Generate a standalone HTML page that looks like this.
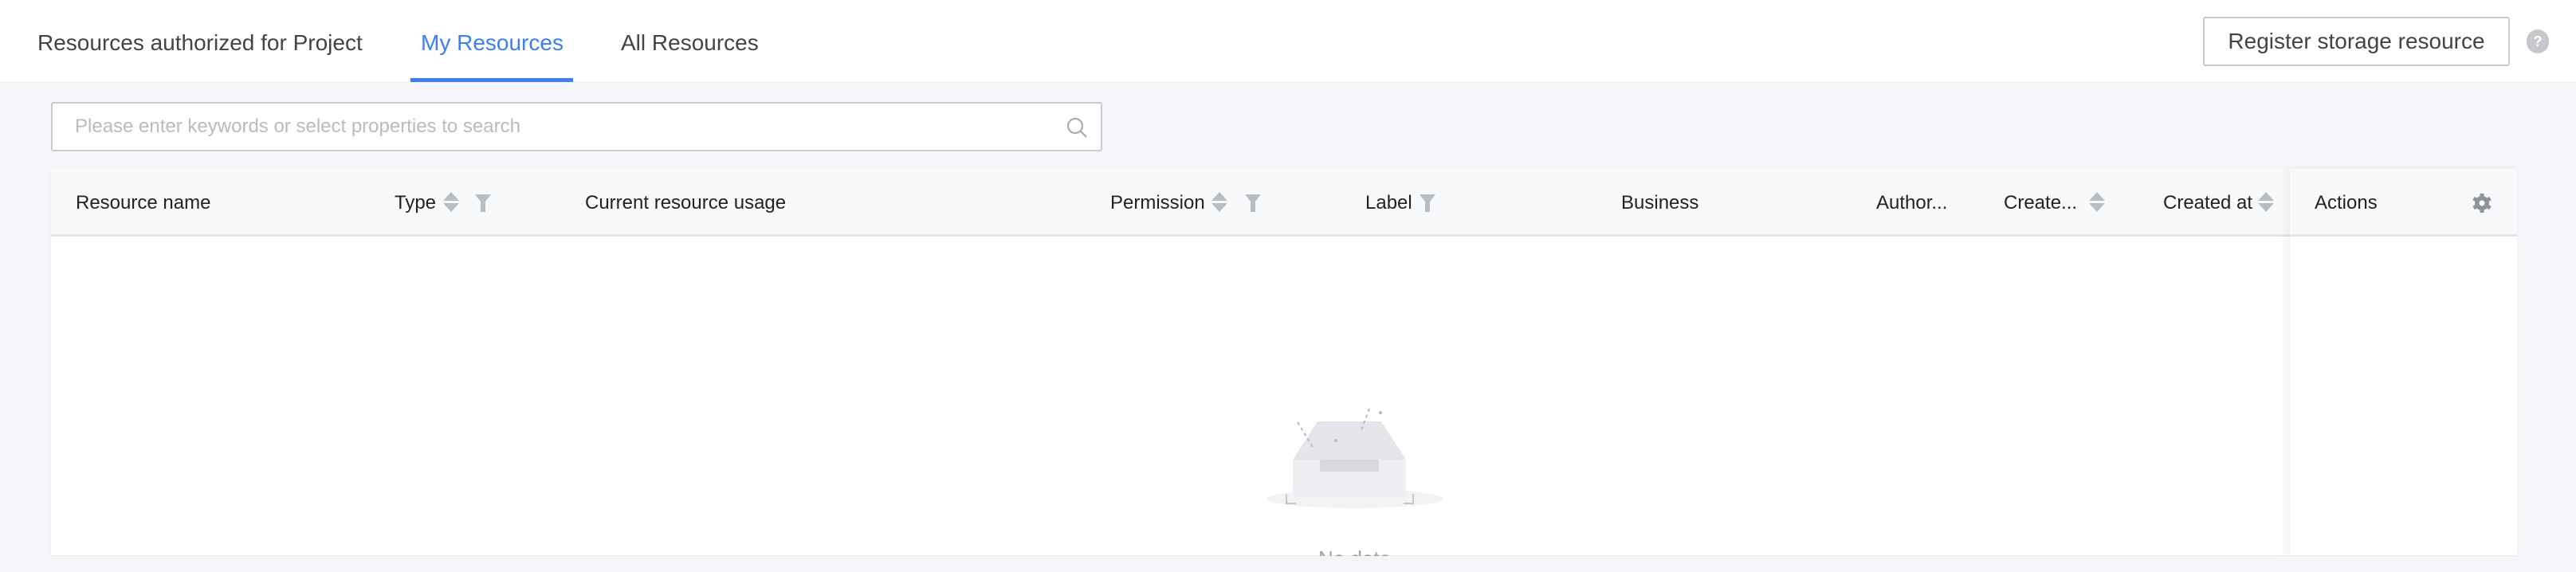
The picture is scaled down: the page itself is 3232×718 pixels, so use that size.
<!DOCTYPE html>
<html><head><meta charset="utf-8"><style>
*{margin:0;padding:0;box-sizing:border-box}
body{width:3232px;height:718px;background:#f4f5f8;font-family:"Liberation Sans",sans-serif;position:relative;overflow:hidden}
.hdr{position:absolute;left:0;top:0;width:3232px;height:102px;background:#fff}
.tab{position:absolute;top:38px;font-size:28px;color:#444;white-space:nowrap}
.abs{position:absolute}
.th{position:absolute;top:241px;font-size:24px;color:#222;white-space:nowrap}
</style></head><body>
<div class="hdr">
 <div class="tab" style="left:47px">Resources authorized for Project</div>
 <div class="tab" style="left:528px;color:#3d7ff0">My Resources</div>
 <div class="abs" style="left:515px;top:98px;width:204px;height:5px;background:#3d7ff0"></div>
 <div class="tab" style="left:779px">All Resources</div>
 <div class="abs" style="left:2764px;top:21px;width:385px;height:62px;border:2px solid #c9cbd0;border-radius:3px;font-size:28px;color:#444;text-align:center;line-height:58px">Register storage resource</div>
 <div class="abs" style="left:3170px;top:37px;width:28px;height:30px;border-radius:14px;background:#c6c8cd;color:#fff;font-size:18px;font-weight:bold;text-align:center;line-height:30px">?</div>
</div>
<div class="abs" style="left:64px;top:128px;width:1319px;height:62px;background:#fff;border:2px solid #c9cbd0;border-radius:3px"></div>
<div class="abs" style="left:94px;top:145px;font-size:24px;color:#b8bbc2">Please enter keywords or select properties to search</div>
<svg class="abs" style="left:1336px;top:145px" width="30" height="30" viewBox="0 0 30 30"><circle cx="13" cy="13" r="9" fill="none" stroke="#a8abb2" stroke-width="2.2"/><line x1="20" y1="20" x2="27" y2="27" stroke="#a8abb2" stroke-width="2.2"/></svg>

<div class="abs" style="left:64px;top:212px;width:3094px;height:485px;background:#fff;box-shadow:0 2px 4px rgba(0,0,0,.04)"></div>
<div class="abs" style="left:64px;top:212px;width:3094px;height:85px;background:#f8f9fb;border-bottom:3px solid #e3e5e9"></div>
<div class="abs" style="left:2873px;top:212px;width:285px;height:485px;box-shadow:-6px 0 8px rgba(0,0,0,.05)"></div>
<div class="abs" style="left:2873px;top:212px;width:285px;height:85px;background:#f8f9fb;border-bottom:3px solid #e3e5e9"></div>

<div class="th" style="left:95px">Resource name</div>
<div class="th" style="left:495px">Type</div>
<div class="th" style="left:734px">Current resource usage</div>
<div class="th" style="left:1393px">Permission</div>
<div class="th" style="left:1713px">Label</div>
<div class="th" style="left:2034px">Business</div>
<div class="th" style="left:2354px">Author...</div>
<div class="th" style="left:2514px">Create...</div>
<div class="th" style="left:2714px">Created at</div>
<div class="th" style="left:2904px">Actions</div>

<svg width="0" height="0" style="position:absolute"><defs>
<g id="s"><path d="M0 11 L10 0 L20 11Z M0 14 L10 25 L20 14Z" fill="#b8bcc4"/></g>
<g id="f"><path d="M0 2 H20 L13 11 V24 H7 V11Z" fill="#b8bcc4"/></g>
</defs></svg>
<svg class="abs" style="left:556px;top:241px" width="20" height="25"><use href="#s"/></svg>
<svg class="abs" style="left:596px;top:242px" width="20" height="24"><use href="#f"/></svg>
<svg class="abs" style="left:1520px;top:241px" width="20" height="25"><use href="#s"/></svg>
<svg class="abs" style="left:1562px;top:242px" width="20" height="24"><use href="#f"/></svg>
<svg class="abs" style="left:1781px;top:242px" width="20" height="24"><use href="#f"/></svg>
<svg class="abs" style="left:2621px;top:241px" width="20" height="25"><use href="#s"/></svg>
<svg class="abs" style="left:2833px;top:241px" width="20" height="25"><use href="#s"/></svg>
<svg class="abs" style="left:3101px;top:242px" width="26" height="26" viewBox="0 0 26 26"><circle cx="13" cy="13" r="9" fill="#8e9199"/><g stroke="#8e9199" stroke-width="5"><line x1="13" y1="1" x2="13" y2="25"/><line x1="2.6" y1="7" x2="23.4" y2="19"/><line x1="2.6" y1="19" x2="23.4" y2="7"/></g><circle cx="13" cy="13" r="3.5" fill="#fff"/></svg>

<svg class="abs" style="left:1580px;top:505px" width="240" height="150" viewBox="1580 505 240 150">
<ellipse cx="1700" cy="626" rx="110" ry="12" fill="#f3f3f5"/>
<path d="M1653 529 H1733 L1764 577 H1622Z" fill="#e4e5e8"/>
<rect x="1622" y="577" width="142" height="47" rx="2" fill="#eeeff2"/>
<rect x="1656" y="577" width="74" height="15" rx="2" fill="#d8d9dc"/>
<path d="M1628 530 L1648 563 M1718 513 L1708 540" stroke="#b8bbc2" stroke-width="2" stroke-dasharray="4 4"/>
<circle cx="1676" cy="553" r="2" fill="#b8bbc2"/><circle cx="1732" cy="518" r="2" fill="#b8bbc2"/>
<path d="M1614 620 V632 H1626 M1773 620 V632 H1761" stroke="#c5c7cc" stroke-width="2" fill="none"/>
</svg>
<div class="abs" style="left:1654px;top:686px;font-size:26px;color:#a0a3aa">No data</div>
<div class="abs" style="left:0;top:698px;width:3232px;height:20px;background:#f4f5f8"></div>
</body></html>
